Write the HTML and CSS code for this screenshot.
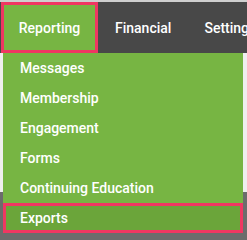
FILE: index.html
```html
<!DOCTYPE html>
<html lang="en">

<head>
  <meta charset="UTF-8">
  <meta name="viewport" content="width=device-width, initial-scale=1.0">
  <title>Reporting menu</title>

  <link rel="stylesheet" href="styles.css">
</head>

<body>
  <header class="top-line"></header>
  <nav class="main-nav">
    <a class="nav-item active" href="#">Reporting</a>
    <a class="nav-item" href="#">Financial</a>
    <a class="nav-item" href="#">Settings</a>

    <ul class="dropdown">
      <li><a href="#">Messages</a></li>
      <li><a href="#">Membership</a></li>
      <li><a href="#">Engagement</a></li>
      <li><a href="#">Forms</a></li>
      <li><a href="#">Continuing Education</a></li>
      <li class="selected"><a href="#">Exports</a></li>
    </ul>
  </nav>

  <main>
    <section class="blank"></section>
    <section class="shade"></section>
  </main>
</body>

</html>
```

FILE: styles.css
```css
body {
  background: #efefef;
  font-family: Roboto, "Liberation Sans", sans-serif;
  margin: 0;
  overflow: hidden;
}

.top-line {
  background: #cfcfcf;
  height: 2px;
}

.main-nav {
  background: #484848;
  display: flex;
  height: 51px;
  position: relative;
}

.nav-item {
  align-items: center;
  color: #fff;
  display: flex;
  flex-shrink: 0;
  font-size: 14px;
  font-weight: 500;
  justify-content: center;
  text-decoration: none;
  white-space: nowrap;
}

.nav-item.active {
  background: #77b543;
  border: 3px solid #ef3762;
  box-sizing: border-box;
  height: 51px;
  margin-left: 1px;
  width: 97px;
}

.nav-item + .nav-item {
  padding: 0 16px 0 17px;
}

.dropdown {
  background: #77b543;
  left: 3px;
  list-style: none;
  margin: 0;
  padding: 0;
  position: absolute;
  top: 51px;
  width: 240px;
}

.dropdown li {
  box-sizing: border-box;
  height: 30px;
}

.dropdown a {
  align-items: center;
  color: #fff;
  display: flex;
  font-size: 14px;
  font-weight: 500;
  height: 100%;
  padding-left: 17px;
  text-decoration: none;
}

.dropdown .selected {
  background: #6ba53a;
  border: 3px solid #ef3762;
}

.dropdown .selected a {
  padding-left: 14px;
}

.blank {
  height: 139px;
}

.shade {
  background: #6c6c6c;
  height: 60px;
}
```
